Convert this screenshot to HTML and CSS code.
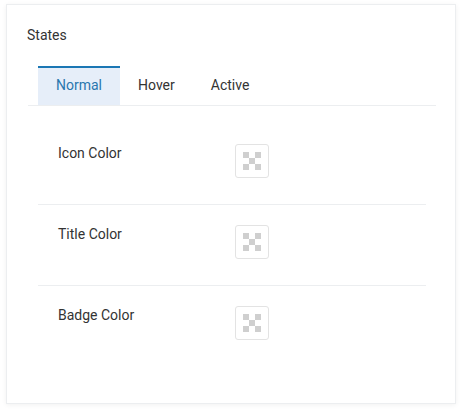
FILE: index.html
```html
<!DOCTYPE html>
<html>
<head>
<meta charset="utf-8">
<link rel="stylesheet" href="styles.css">
</head>
<body>
<div class="card">
  <div class="section-title">States</div>
  <div class="tabs">
    <div class="tab active">Normal</div>
    <div class="tab">Hover</div>
    <div class="tab">Active</div>
  </div>
  <div class="panel">
    <div class="row">
      <div class="label">Icon Color</div>
      <div class="swatch"><span class="checker"></span></div>
    </div>
    <div class="row">
      <div class="label">Title Color</div>
      <div class="swatch"><span class="checker"></span></div>
    </div>
    <div class="row">
      <div class="label">Badge Color</div>
      <div class="swatch"><span class="checker"></span></div>
    </div>
  </div>
</div>
</body>
</html>
```
FILE: styles.css
```css
* { box-sizing: border-box; }
html, body { margin: 0; padding: 0; background: #fff; }
body {
  font-family: Roboto, "Liberation Sans", sans-serif;
  font-size: 14px;
  color: #333;
  padding: 4px 6px 5px;
}
.card {
  background: #fff;
  border: 1px solid #eceef0;
  box-shadow: 0 1px 5px rgba(0,0,0,0.06);
  padding: 20px 19px 20px 20px;
  height: 400px;
}
.section-title {
  line-height: 20px;
}
.tabs {
  margin-top: 21px;
  display: flex;
  padding-left: 10px;
  border-bottom: 1px solid #eceef0;
  margin-left: 1px;
}
.tab {
  padding: 7px 18px 10px;
  border-top: 2px solid transparent;
  line-height: 20px;
  color: #333;
}
.tab.active {
  background: #e6eef9;
  border-top-color: #1b77b4;
  color: #2a77ae;
}
.panel {
  padding: 18px 10px 0 11px;
}
.row {
  display: grid;
  grid-template-columns: 177px 34px;
  padding: 20px 20px 26px;
  border-bottom: 1px solid #eceef0;
}
.row:last-child { border-bottom: none; }
.label {
  line-height: 18px;
}
.swatch {
  width: 34px;
  height: 34px;
  border: 1px solid #e3e3e3;
  border-radius: 3px;
  display: flex;
  align-items: center;
  justify-content: center;
  background: #fff;
}
.checker {
  width: 18px;
  height: 18px;
  background:
    linear-gradient(#cfcfcf, #cfcfcf) 0 0 / 6px 6px no-repeat,
    linear-gradient(#cfcfcf, #cfcfcf) 12px 0 / 6px 6px no-repeat,
    linear-gradient(#cfcfcf, #cfcfcf) 6px 6px / 6px 6px no-repeat,
    linear-gradient(#cfcfcf, #cfcfcf) 0 12px / 6px 6px no-repeat,
    linear-gradient(#cfcfcf, #cfcfcf) 12px 12px / 6px 6px no-repeat;
}
```
